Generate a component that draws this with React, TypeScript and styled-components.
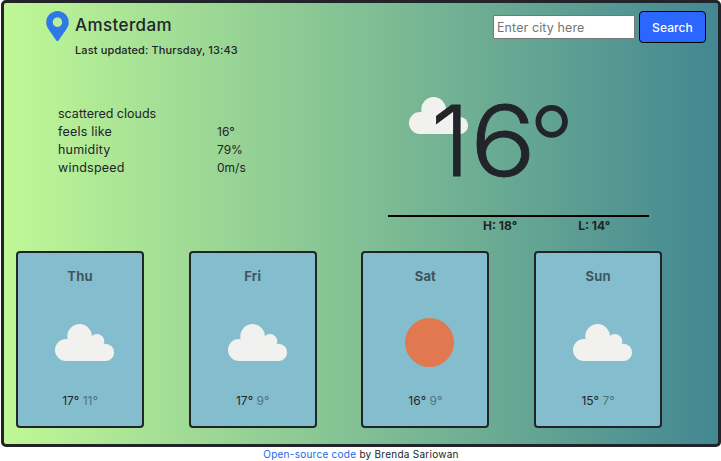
import React from 'react';
import styled, { createGlobalStyle } from 'styled-components';
import { FaMapMarkerAlt } from 'react-icons/fa';

const GlobalStyle = createGlobalStyle`
  * { box-sizing: border-box; }
  body {
    margin: 0;
    background: #fff;
    color: #212529;
    font-family: Inter, "Open Sans", sans-serif;
    font-size: 12px;
    overflow: hidden;
  }
`;

const Panel = styled.main`
  width: 720px;
  height: 447px;
  margin-left: 1px;
  border: 3px solid #212529;
  border-radius: 5px;
  background: linear-gradient(to right, #c0f896, #438792);
`;

const Header = styled.header`
  display: flex;
  height: 78px;
  padding: 8px 12px 0 42px;
`;

const Pin = styled(FaMapMarkerAlt)`
  width: 23px;
  height: 30px;
  color: #2f78e8;
`;

const Place = styled.div`
  margin-left: 6px;
  flex: 1;
`;

const City = styled.h1`
  margin: 3px 0 0;
  font-size: 17px;
  line-height: 22px;
  font-weight: 500;
  letter-spacing: 0.4px;
`;

const Updated = styled.p`
  margin: 6px 0 0;
  font-size: 11px;
  line-height: 16px;
  font-weight: 500;
  letter-spacing: 0.13px;
`;

const SearchForm = styled.form`
  display: flex;
  align-items: flex-start;
  gap: 4px;
`;

const CityInput = styled.input`
  width: 142px;
  height: 24px;
  margin-top: 4px;
  padding: 0 3px;
  border: 1px solid #767676;
  border-radius: 1px;
  background: #fff;
  font: 12.5px Inter, sans-serif;
  letter-spacing: 0.1px;
  &::placeholder { color: #757575; }
`;

const SearchButton = styled.button`
  width: 67px;
  height: 32px;
  padding: 0;
  border: 1px solid #000;
  border-radius: 4px;
  background: #2b66ff;
  color: #fff;
  font: 500 12px Inter, sans-serif;
  letter-spacing: 0.1px;
`;

const Current = styled.section`
  display: flex;
  height: 170px;
  padding-left: 54px;
`;

const Details = styled.dl`
  display: grid;
  grid-template-columns: 159px 1fr;
  grid-auto-rows: 18px;
  width: 330px;
  margin: 24px 0 0;
  line-height: 18px;
`;

const Label = styled.dt<{ $wide?: boolean }>`
  grid-column: ${(p) => (p.$wide ? '1 / -1' : 'auto')};
  font-size: 12.5px;
  letter-spacing: ${(p) => (p.$wide ? '0' : '0.2px')};
`;

const Value = styled.dd`
  margin: 0;
`;

const Temperature = styled.div`
  width: 261px;
`;

const Reading = styled.div`
  display: flex;
  align-items: flex-start;
  height: 136px;
  padding: 16px 0 0 21px;
  border-bottom: 2px solid #000;
`;

const CloudSvg = styled.svg`
  display: block;
  flex: none;
  width: 60px;
  height: 38px;
`;

const Degrees = styled.div`
  display: flex;
  align-items: flex-start;
  position: relative;
  margin: -5px 0 0 -38px;
  font-size: 98px;
  line-height: 98px;
  font-weight: 300;
  -webkit-text-stroke: 0.8px #212529;
`;

const WideDigit = styled.span`
  transform: scaleX(1.12);
  transform-origin: left;
`;

const DegreeMark = styled.span`
  margin: 2px 0 0;
  font-size: 102px;
  line-height: 98px;
  -webkit-text-stroke: 0;
`;

const HighLow = styled.div`
  display: flex;
  gap: 61px;
  padding-left: 95px;
  font-weight: 700;
  line-height: 18px;
`;

const Forecast = styled.section`
  display: grid;
  grid-template-columns: repeat(4, 128px);
  column-gap: 44.7px;
  padding-left: 12px;
`;

const Card = styled.article`
  display: flex;
  flex-direction: column;
  align-items: center;
  height: 177px;
  padding-top: 14px;
  border: 2px solid #212529;
  border-radius: 4px;
  background: #84bece;
`;

const Day = styled.h2`
  margin: 0;
  font-size: 13px;
  line-height: 18px;
  font-weight: 700;
  letter-spacing: 0.15px;
  color: #41555f;
`;

const Picture = styled.div`
  width: 50px;
  height: 50px;
  margin: 33px 0 0;
  padding-top: 6px;
`;

const Sun = styled.div`
  width: 49px;
  height: 49px;
  margin: -6px 0 0 5px;
  border-radius: 50%;
  background: #e2784f;
`;

const Range = styled.p`
  margin: 24px 0 0;
  line-height: 18px;
`;

const Low = styled.span`
  color: #53717c;
`;

const Footer = styled.footer`
  padding-left: 1px;
  text-align: center;
  font-size: 10px;
  line-height: 15px;
  letter-spacing: 0.26px;
`;

const SourceLink = styled.a`
  color: #2467e8;
  text-decoration: none;
`;

function Cloud() {
  return (
    <CloudSvg viewBox="0 0 60 38" fill="#f1f1ef">
      <circle cx="11" cy="26" r="11" />
      <circle cx="24.6" cy="12.4" r="12.3" />
      <circle cx="41.9" cy="17.4" r="7.4" />
      <circle cx="50.5" cy="28.4" r="8.6" />
      <path d="M11 15h14l17 2 8.5 11v9H11z" />
    </CloudSvg>
  );
}

const forecast = [
  { day: 'Thu', sky: 'cloud', high: 17, low: 11 },
  { day: 'Fri', sky: 'cloud', high: 17, low: 9 },
  { day: 'Sat', sky: 'sun', high: 16, low: 9 },
  { day: 'Sun', sky: 'cloud', high: 15, low: 7 },
];

export default function App() {
  return (
    <>
      <GlobalStyle />
      <Panel>
        <Header>
          <Pin />
          <Place>
            <City>Amsterdam</City>
            <Updated>Last updated: Thursday, 13:43</Updated>
          </Place>
          <SearchForm>
            <CityInput placeholder="Enter city here" />
            <SearchButton type="button">Search</SearchButton>
          </SearchForm>
        </Header>
        <Current>
          <Details>
            <Label $wide>scattered clouds</Label>
            <Label>feels like</Label>
            <Value>16°</Value>
            <Label>humidity</Label>
            <Value>79%</Value>
            <Label>windspeed</Label>
            <Value>0m/s</Value>
          </Details>
          <Temperature>
            <Reading>
              <Cloud />
              <Degrees>
                <span>1</span>
                <WideDigit>6</WideDigit>
                <DegreeMark>°</DegreeMark>
              </Degrees>
            </Reading>
            <HighLow>
              <span>H: 18°</span>
              <span>L: 14°</span>
            </HighLow>
          </Temperature>
        </Current>
        <Forecast>
          {forecast.map(({ day, sky, high, low }) => (
            <Card key={day}>
              <Day>{day}</Day>
              <Picture>{sky === 'sun' ? <Sun /> : <Cloud />}</Picture>
              <Range>
                {high}° <Low>{low}°</Low>
              </Range>
            </Card>
          ))}
        </Forecast>
      </Panel>
      <Footer>
        <SourceLink href="#">Open-source code</SourceLink> by Brenda Sariowan
      </Footer>
    </>
  );
}
